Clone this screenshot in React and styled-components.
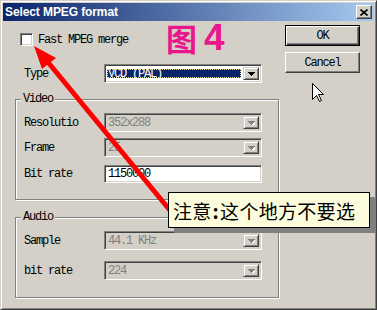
import React from 'react';
import styled, { createGlobalStyle, css } from 'styled-components';

const Global = createGlobalStyle`
  html, body { margin: 0; padding: 0; background: #d4d0c8; }
  * { box-sizing: border-box; }
`;

const mono = `"Liberation Mono", "DejaVu Sans Mono", monospace`;

const Window = styled.div`
  position: relative;
  width: 377px;
  height: 310px;
  background: #d4d0c8;
  border: 1px solid;
  border-color: #d4d0c8 #404040 #404040 #d4d0c8;
  box-shadow: inset 1px 1px 0 #fff, inset -1px -1px 0 #808080;
  padding: 2px;
  display: flex;
  flex-direction: column;
  font-family: ${mono};
  font-size: 12px;
  letter-spacing: -1.2px;
  color: #000;
  overflow: hidden;
`;

const TitleBar = styled.div`
  height: 18px;
  flex-shrink: 0;
  display: flex;
  align-items: center;
  justify-content: space-between;
  padding: 0 2px 0 2px;
  background: linear-gradient(to right, #0a246a, #a6caf0);
`;

const TitleText = styled.span`
  font-family: "Liberation Sans", Arial, sans-serif;
  font-weight: bold;
  font-size: 12px;
  letter-spacing: -0.1px;
  color: #fff;
`;

const CloseBtn = styled.div`
  width: 16px;
  height: 14px;
  background: #d4d0c8;
  border: 1px solid;
  border-color: #fff #404040 #404040 #fff;
  box-shadow: inset -1px -1px 0 #808080;
  display: flex;
  align-items: center;
  justify-content: center;
`;

const Body = styled.div`
  flex: 1;
  display: flex;
  padding: 4px 0 0 12px;
  gap: 6px;
`;

const LeftCol = styled.div`
  width: 264px;
  display: flex;
  flex-direction: column;
`;

const RightCol = styled.div`
  width: 75px;
  display: flex;
  flex-direction: column;
  gap: 6px;
`;

const CheckRow = styled.div`
  margin-top: 8px;
  padding-left: 5px;
  height: 13px;
  display: flex;
  align-items: center;
  gap: 5px;
`;

const CheckBox = styled.div`
  width: 13px;
  height: 13px;
  background: #fff;
  border: 1px solid;
  border-color: #808080 #fff #fff #808080;
  box-shadow: inset 1px 1px 0 #404040, inset -1px -1px 0 #d4d0c8;
`;

const Row = styled.div`
  display: flex;
  align-items: center;
  margin-top: ${p => p.$mt || 0}px;
`;

const Label = styled.div`
  width: ${p => p.$w}px;
  padding-left: ${p => p.$pl}px;
  white-space: nowrap;
  overflow: hidden;
`;

const Field = styled.div`
  width: 158px;
  height: ${p => p.$h || 19}px;
  border: 1px solid;
  border-color: #808080 #fff #fff #808080;
  box-shadow: inset 1px 1px 0 #404040, inset -1px -1px 0 #d4d0c8;
  background: ${p => (p.$disabled ? '#d4d0c8' : '#fff')};
  padding: 2px;
  display: flex;
  align-items: stretch;
`;

const Value = styled.div`
  flex: 1;
  display: flex;
  align-items: center;
  padding-left: 1px;
  white-space: nowrap;
  color: ${p => (p.$disabled ? '#808080' : '#000')};
  ${p =>
    p.$selected &&
    css`
      margin: 0 1px 0 0;
      padding-left: 1px;
      background: #0a246a;
      color: #fff;
      outline: 1px dotted #e8e0a0;
      outline-offset: -1px;
    `}
`;

const SelectedWrap = styled.div`
  flex: 1;
  display: flex;
  padding: 2px 1px 2px 0;
`;

const DropBtn = styled.div`
  width: 16px;
  flex-shrink: 0;
  background: #d4d0c8;
  border: 1px solid;
  border-color: #d4d0c8 #404040 #404040 #d4d0c8;
  box-shadow: inset 1px 1px 0 #fff, inset -1px -1px 0 #808080;
  display: flex;
  align-items: center;
  justify-content: center;
`;

const Group = styled.div`
  margin-top: ${p => p.$mt}px;
  padding-bottom: ${p => p.$pb}px;
  border: 1px solid #808080;
  box-shadow: inset 1px 1px 0 #fff, 1px 1px 0 #fff;
  display: flex;
  flex-direction: column;
`;

const GroupTitle = styled.div`
  align-self: flex-start;
  margin: -7px 0 0 5px;
  padding: 0 2px;
  height: 12px;
  line-height: 12px;
  background: #d4d0c8;
`;

const Button = styled.button`
  width: 75px;
  height: 21px;
  padding: 0;
  margin: 0;
  font: inherit;
  letter-spacing: inherit;
  color: #000;
  background: #d4d0c8;
  display: flex;
  align-items: center;
  justify-content: center;
  ${p =>
    p.$default
      ? css`
          border: 1px solid #000;
          box-shadow: inset 1px 1px 0 #fff, inset -1px -1px 0 #404040,
            inset -2px -2px 0 #808080;
        `
      : css`
          border: 1px solid;
          border-color: #fff #404040 #404040 #fff;
          box-shadow: inset -1px -1px 0 #808080;
        `}
`;

const FigLabel = styled.div`
  position: absolute;
  left: 165px;
  top: 20px;
  display: flex;
  align-items: flex-end;
  color: #e9168c;
  font-weight: bold;
  letter-spacing: 0;
  pointer-events: none;
`;

const FigChar = styled.span`
  font-family: "Noto Sans CJK SC", sans-serif;
  font-size: 31px;
  line-height: 34px;
`;

const FigNum = styled.span`
  font-family: "Liberation Sans", Arial, sans-serif;
  font-size: 37px;
  line-height: 34px;
  margin-left: 7px;
`;

const Overlay = styled.svg`
  position: absolute;
  left: 0;
  top: 0;
  pointer-events: none;
`;

const Cursor = styled.svg`
  position: absolute;
  left: 311px;
  top: 82px;
  pointer-events: none;
`;

const Note = styled.div`
  position: absolute;
  left: 167px;
  top: 191px;
  width: 202px;
  height: 36px;
  background: #fcfcdc;
  border: 1px solid #000;
  box-shadow: 6px 5px 0 #808080;
  display: flex;
  align-items: center;
  padding-left: 4px;
  font-family: "Noto Sans CJK SC", sans-serif;
  font-size: 19px;
  letter-spacing: 0.3px;
  color: #000;
  white-space: nowrap;
`;

const Colon = styled.b`
  margin: 0 1px;
`;

function Arrow({ disabled }) {
  return (
    <svg width="7" height="4" viewBox="0 0 7 4" shapeRendering="crispEdges">
      {disabled && <polygon points="1,1 8,1 4.5,5" fill="#fff" />}
      <polygon points="0,0 7,0 3.5,4" fill={disabled ? '#808080' : '#000'} />
    </svg>
  );
}

function Combo({ value, disabled, selected }) {
  return (
    <Field $disabled={disabled}>
      {selected ? (
        <SelectedWrap>
          <Value $selected>{value}</Value>
        </SelectedWrap>
      ) : (
        <Value $disabled={disabled}>{value}</Value>
      )}
      <DropBtn>
        <Arrow disabled={disabled} />
      </DropBtn>
    </Field>
  );
}

export default function App() {
  return (
    <>
      <Global />
      <Window>
        <TitleBar>
          <TitleText>Select MPEG format</TitleText>
          <CloseBtn>
            <svg width="8" height="7" viewBox="0 0 8 7">
              <path d="M0.5 0.5 L7.5 6.5 M7.5 0.5 L0.5 6.5" stroke="#000" strokeWidth="1.6" />
            </svg>
          </CloseBtn>
        </TitleBar>
        <Body>
          <LeftCol>
            <CheckRow>
              <CheckBox />
              <span>Fast MPEG merge</span>
            </CheckRow>
            <Row $mt={18}>
              <Label $w={89} $pl={9}>Type</Label>
              <Combo value="VCD (PAL)" selected />
            </Row>
            <Group $mt={16} $pb={16}>
              <GroupTitle>Video</GroupTitle>
              <Row $mt={8}>
                <Label $w={88} $pl={8}>Resolutio</Label>
                <Combo value="352x288" disabled />
              </Row>
              <Row $mt={6}>
                <Label $w={88} $pl={8}>Frame</Label>
                <Combo value="25" disabled />
              </Row>
              <Row $mt={8}>
                <Label $w={88} $pl={8}>Bit rate</Label>
                <Field $h={18}>
                  <Value>1150000</Value>
                </Field>
              </Row>
            </Group>
            <Group $mt={17} $pb={17}>
              <GroupTitle>Audio</GroupTitle>
              <Row $mt={8}>
                <Label $w={88} $pl={8}>Sample</Label>
                <Combo value="44.1 KHz" disabled />
              </Row>
              <Row $mt={11}>
                <Label $w={88} $pl={8}>bit rate</Label>
                <Combo value="224" disabled />
              </Row>
            </Group>
          </LeftCol>
          <RightCol>
            <Button $default>OK</Button>
            <Button>Cancel</Button>
          </RightCol>
        </Body>

        <FigLabel>
          <FigChar>图</FigChar>
          <FigNum>4</FigNum>
        </FigLabel>

        <Overlay width="377" height="310" viewBox="0 0 377 310">
          <line x1="46" y1="60" x2="172" y2="213" stroke="#ff0000" strokeWidth="5" />
          <polygon points="33,45 41,68 55,57" fill="#ff0000" />
        </Overlay>

        <Note>
          注意<Colon>:</Colon>这个地方不要选
        </Note>

        <Cursor width="12" height="20" viewBox="0 0 12 20">
          <path
            d="M0.5 0.5 L0.5 16.5 L4.5 12.5 L7.5 18.5 L9.5 17.5 L6.5 11.5 L11.5 11.5 Z"
            fill="#fff"
            stroke="#000"
            strokeWidth="1"
          />
        </Cursor>
      </Window>
    </>
  );
}
